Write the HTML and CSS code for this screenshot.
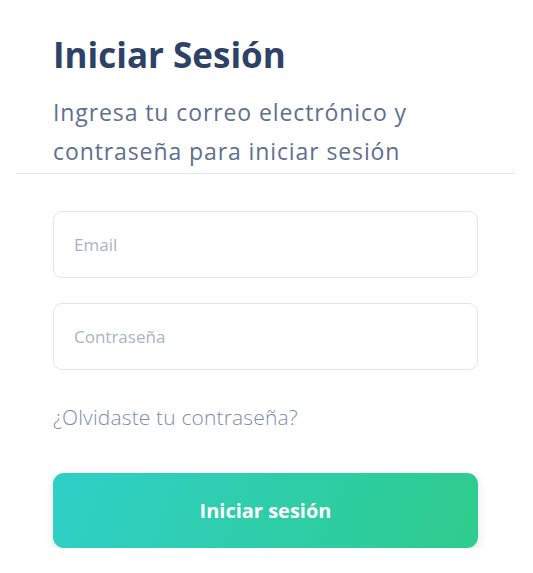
FILE: index.html
```html
<!DOCTYPE html>
<html lang="es">
<head>
<meta charset="utf-8">
<title>Iniciar Sesión</title>
<link rel="stylesheet" href="styles.css">
</head>
<body>
<div class="page">
  <header class="head">
    <h1 class="title">Iniciar Sesión</h1>
    <p class="subtitle">Ingresa tu correo electrónico y contraseña para iniciar sesión</p>
  </header>
  <hr class="divider">
  <form class="form">
    <input class="field" type="email" placeholder="Email">
    <input class="field" type="password" placeholder="Contraseña">
    <a class="forgot" href="#">¿Olvidaste tu contraseña?</a>
    <button class="submit" type="button">Iniciar sesión</button>
  </form>
</div>
</body>
</html>
```

FILE: styles.css
```css
* { box-sizing: border-box; }
html, body { margin: 0; padding: 0; background: #ffffff; }
body { font-family: "Open Sans", "Liberation Sans", sans-serif; }

.page {
  width: 533px;
  padding: 35px 0 0 0;
}

.head { padding: 0 40px 0 53px; }

.title {
  margin: 0;
  font-size: 35px;
  line-height: 40px;
  font-weight: 700;
  color: #2e4166;
}

.subtitle {
  margin: 18px 0 0 0;
  font-size: 23px;
  line-height: 39px;
  font-weight: 400;
  color: #5e6f91;
  letter-spacing: 0.9px;
  width: 400px;
}

.divider {
  margin: 2px 18px 0 16px;
  border: 0;
  border-top: 1px solid #e3e5e9;
  height: 0;
}

.form {
  display: flex;
  flex-direction: column;
  padding: 37px 55px 0 53px;
}

.field {
  display: block;
  width: 425px;
  height: 67px;
  margin: 0 0 25px 0;
  padding: 0 20px;
  border: 1px solid #e1e5ec;
  border-radius: 9px;
  background: #fff;
  font-family: "Open Sans", "Liberation Sans", sans-serif;
  font-size: 17px;
  color: #2e4166;
  outline: none;
}
.field::placeholder { color: #a9b3c3; }

.forgot {
  margin-top: 8px;
  align-self: flex-start;
  font-size: 21px;
  line-height: 28px;
  font-weight: 300;
  color: #7d8cab;
  text-decoration: none;
  letter-spacing: 0.15px;
}

.submit {
  margin-top: 42px;
  width: 425px;
  height: 75px;
  border: 0;
  border-radius: 11px;
  background: linear-gradient(110deg, #2fcfc8 0%, #2ecc8c 100%);
  box-shadow: 0 4px 10px rgba(40, 60, 90, 0.14);
  font-family: "Open Sans", "Liberation Sans", sans-serif;
  font-size: 20px;
  font-weight: 700;
  color: #ffffff;
  cursor: pointer;
}
```
